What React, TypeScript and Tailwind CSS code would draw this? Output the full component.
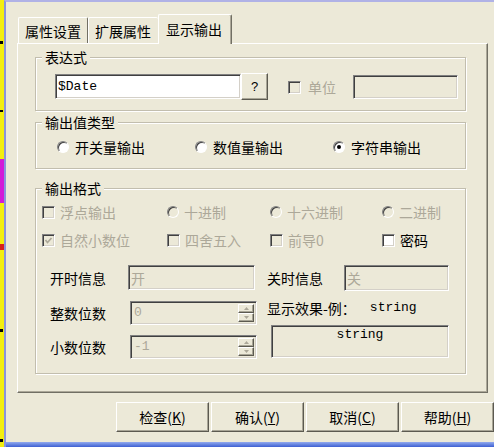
import React from "react";

const sunken =
  "border border-t-[#808080] border-l-[#808080] border-b-white border-r-white shadow-[inset_1px_1px_0_#404040,inset_-1px_-1px_0_#d4d0c8]";
const raised =
  "border border-t-white border-l-white border-b-[#5c5a50] border-r-[#5c5a50] shadow-[inset_-1px_-1px_0_#a8a596]";

function Check({ checked = false, disabled = false }: { checked?: boolean; disabled?: boolean }) {
  return (
    <span
      className={`inline-flex items-center justify-center w-[13px] h-[13px] shrink-0 ${sunken} ${
        disabled ? "bg-[#ECE9D8]" : "bg-white"
      }`}
    >
      {checked && (
        <svg width="9" height="9" viewBox="0 0 9 9">
          <path d="M1.5 4 L3.5 6.5 L7.5 2" stroke={disabled ? "#ACA899" : "#000"} strokeWidth="1.7" fill="none" />
        </svg>
      )}
    </span>
  );
}

function Radio({ checked = false, disabled = false }: { checked?: boolean; disabled?: boolean }) {
  return (
    <span
      className={`inline-flex items-center justify-center w-[12px] h-[12px] rounded-full shrink-0 border border-t-[#808080] border-l-[#808080] border-b-white border-r-white shadow-[inset_1px_1px_0_#404040] ${
        disabled ? "bg-[#ECE9D8]" : "bg-white"
      }`}
    >
      {checked && <span className="w-[4px] h-[4px] rounded-full bg-black" />}
    </span>
  );
}

function Group({ title, className, children }: { title: string; className: string; children: React.ReactNode }) {
  return (
    <fieldset className={`w-[431px] border border-[#c2beae] shadow-[inset_1px_1px_0_#ffffff,1px_1px_0_#ffffff] ${className}`}>
      <legend className="ml-[6px] px-[3px] leading-[18px] text-[14px] bg-[#ECE9D8]">{title}</legend>
      {children}
    </fieldset>
  );
}

function Opt({
  kind,
  label,
  checked = false,
  disabled = false,
}: {
  kind: "check" | "radio";
  label: string;
  checked?: boolean;
  disabled?: boolean;
}) {
  return (
    <div className={`flex items-center gap-[5px] h-[16px] text-[14px] leading-[16px] ${disabled ? "text-[#ACA899]" : "text-black"}`}>
      {kind === "check" ? <Check checked={checked} disabled={disabled} /> : <Radio checked={checked} disabled={disabled} />}
      <span>{label}</span>
    </div>
  );
}

function Spin({ value }: { value: string }) {
  return (
    <div className={`w-[127px] h-[24px] flex items-stretch bg-[#ECE9D8] ${sunken} p-[2px]`}>
      <span className="flex-1 pl-[1px] text-[13px] leading-[18px] text-[#ACA899] font-['Liberation_Mono',monospace]">{value}</span>
      <div className="w-[16px] flex flex-col">
        <div className={`flex-1 flex items-center justify-center ${raised}`}>
          <svg width="5" height="3" viewBox="0 0 5 3">
            <path d="M0 3 L2.5 0 L5 3 Z" fill="#ACA899" />
          </svg>
        </div>
        <div className={`flex-1 flex items-center justify-center ${raised}`}>
          <svg width="5" height="3" viewBox="0 0 5 3">
            <path d="M0 0 L2.5 3 L5 0 Z" fill="#ACA899" />
          </svg>
        </div>
      </div>
    </div>
  );
}

function Btn({ label, k }: { label: string; k: string }) {
  return (
    <button className={`w-[93px] h-[30px] bg-[#ECE9D8] ${raised} text-[14px] leading-[16px] flex items-center justify-center`}>
      {label}(<span className="underline">{k}</span>)
    </button>
  );
}

function LeftStrip() {
  return (
    <div className="w-[4px] h-full flex flex-col bg-[#f3ee10] shrink-0">
      <div className="h-[41px]" />
      <div className="h-[3px] w-[3px] bg-black" />
      <div className="h-[66px]" />
      <div className="h-[2px] w-[3px] bg-black" />
      <div className="h-[47px]" />
      <div className="h-[44px] bg-[#d31bd8]" />
      <div className="h-[41px]" />
      <div className="h-[6px] bg-[#d8231b]" />
      <div className="h-[79px]" />
      <div className="h-[3px] w-[3px] bg-black" />
      <div className="h-[107px]" />
      <div className="h-[3px] w-[3px] bg-black" />
    </div>
  );
}

export default function App() {
  return (
    <div className="w-[494px] h-[447px] flex bg-[#ECE9D8] overflow-hidden text-black font-['Noto_Sans_CJK_SC','Noto_Sans',sans-serif]">
      <LeftStrip />
      <div className="flex-1 flex flex-col border-l-2 border-l-[#8a94dc] border-t-2 border-t-[#b0b2e6]">
        <div className="pt-[12px] flex-1 flex flex-col">
          {/* Tabs */}
          <div className="flex items-end h-[30px] -mb-px ml-[12px] relative z-10">
            <div className="w-[70px] h-[26px] mb-px pl-[6px] flex items-center border-t border-l border-r border-t-white border-l-white border-r-[#716F64] rounded-t-[2px] text-[14px] leading-[16px]">
              属性设置
            </div>
            <div className="w-[70px] h-[26px] mb-px pl-[6px] flex items-center border-t border-l border-t-white border-l-white rounded-t-[2px] text-[14px] leading-[16px]">
              扩展属性
            </div>
            <div className="w-[74px] h-[30px] pl-[7px] pb-[1px] flex items-center bg-[#ECE9D8] border-t border-l border-r border-t-white border-l-white border-r-[#716F64] rounded-t-[2px] shadow-[inset_-1px_0_0_#ACA899] text-[14px] leading-[16px]">
              显示输出
            </div>
          </div>

          {/* Panel */}
          <div className="w-[471px] h-[350px] ml-[11px] border border-t-white border-l-white border-r-[#716F64] border-b-[#716F64] shadow-[inset_-1px_-1px_0_#ACA899] pl-[17px] pt-[4px] flex flex-col">
            <Group title="表达式" className="h-[63px]">
              <div className="flex items-center h-[27px] mt-[7px] ml-[19px]">
                <div className={`w-[186px] h-[25px] bg-white ${sunken} pl-[2px] flex items-center text-[13px] font-['Liberation_Mono',monospace]`}>
                  $Date
                </div>
                <button className={`w-[27px] h-[27px] bg-[#ECE9D8] ${raised} text-[13px] leading-[16px] flex items-center justify-center font-['Liberation_Sans',sans-serif]`}>
                  ?
                </button>
                <div className="ml-[20px]">
                  <Check disabled />
                </div>
                <span className="ml-[7px] text-[14px] leading-[16px] text-[#ACA899]">单位</span>
                <div className={`ml-[17px] w-[105px] h-[24px] bg-[#ECE9D8] ${sunken}`} />
              </div>
            </Group>

            <Group title="输出值类型" className="mt-[2px] h-[56px]">
              <div className="grid grid-cols-[138px_138px_1fr] mt-[8px] ml-[21px]">
                <div className="flex items-center gap-[6px] h-[16px] text-[14px] leading-[16px]">
                  <Radio />
                  <span>开关量输出</span>
                </div>
                <div className="flex items-center gap-[6px] h-[16px] text-[14px] leading-[16px]">
                  <Radio />
                  <span>数值量输出</span>
                </div>
                <div className="flex items-center gap-[6px] h-[16px] text-[14px] leading-[16px]">
                  <Radio checked />
                  <span>字符串输出</span>
                </div>
              </div>
            </Group>

            <Group title="输出格式" className="mt-[10px] h-[195px]">
              <div className="grid grid-cols-[125px_103px_112px_1fr] gap-y-[12px] ml-[6px] mt-[7px]">
                <Opt kind="check" label="浮点输出" disabled />
                <Opt kind="radio" label="十进制" disabled />
                <Opt kind="radio" label="十六进制" disabled />
                <Opt kind="radio" label="二进制" disabled />
                <Opt kind="check" label="自然小数位" checked disabled />
                <Opt kind="check" label="四舍五入" disabled />
                <Opt kind="check" label="前导0" disabled />
                <Opt kind="check" label="密码" />
              </div>

              <div className="flex mt-[17px] ml-[14px] text-[14px] leading-[16px]">
                <div className="w-[207px] flex flex-col">
                  <div className="flex items-center h-[25px]">
                    <span className="w-[78px]">开时信息</span>
                    <div className={`w-[127px] h-[25px] bg-[#ECE9D8] ${sunken} pl-[2px] flex items-center text-[#ACA899]`}>开</div>
                  </div>
                  <div className="flex items-center h-[24px] mt-[11px]">
                    <span className="w-[80px]">整数位数</span>
                    <Spin value="0" />
                  </div>
                  <div className="flex items-center h-[24px] mt-[10px]">
                    <span className="w-[80px]">小数位数</span>
                    <Spin value="-1" />
                  </div>
                </div>
                <div className="ml-[10px] flex flex-col">
                  <div className="flex items-center h-[26px]">
                    <span className="w-[77px]">关时信息</span>
                    <div className={`w-[105px] h-[26px] bg-[#ECE9D8] ${sunken} pl-[2px] flex items-center text-[#ACA899]`}>关</div>
                  </div>
                  <div className="mt-[9px] h-[16px] flex items-center">
                    <span>显示效果-例：</span>
                    <span className="ml-[14px] text-[13px] font-['Liberation_Mono',monospace]">string</span>
                  </div>
                  <div className={`mt-[9px] ml-[4px] w-[178px] h-[33px] bg-[#ECE9D8] ${sunken} pt-[1px] text-center text-[13px] leading-[16px] font-['Liberation_Mono',monospace]`}>
                    string
                  </div>
                </div>
              </div>
            </Group>
          </div>

          {/* Buttons */}
          <div className="flex justify-end gap-[2px] mt-[9px]">
            <Btn label="检查" k="K" />
            <Btn label="确认" k="Y" />
            <Btn label="取消" k="C" />
            <Btn label="帮助" k="H" />
          </div>
        </div>
        <div className="h-[5px] shrink-0 bg-gradient-to-b from-[#93aaee] to-[#3f5fd2]" />
      </div>
    </div>
  );
}
